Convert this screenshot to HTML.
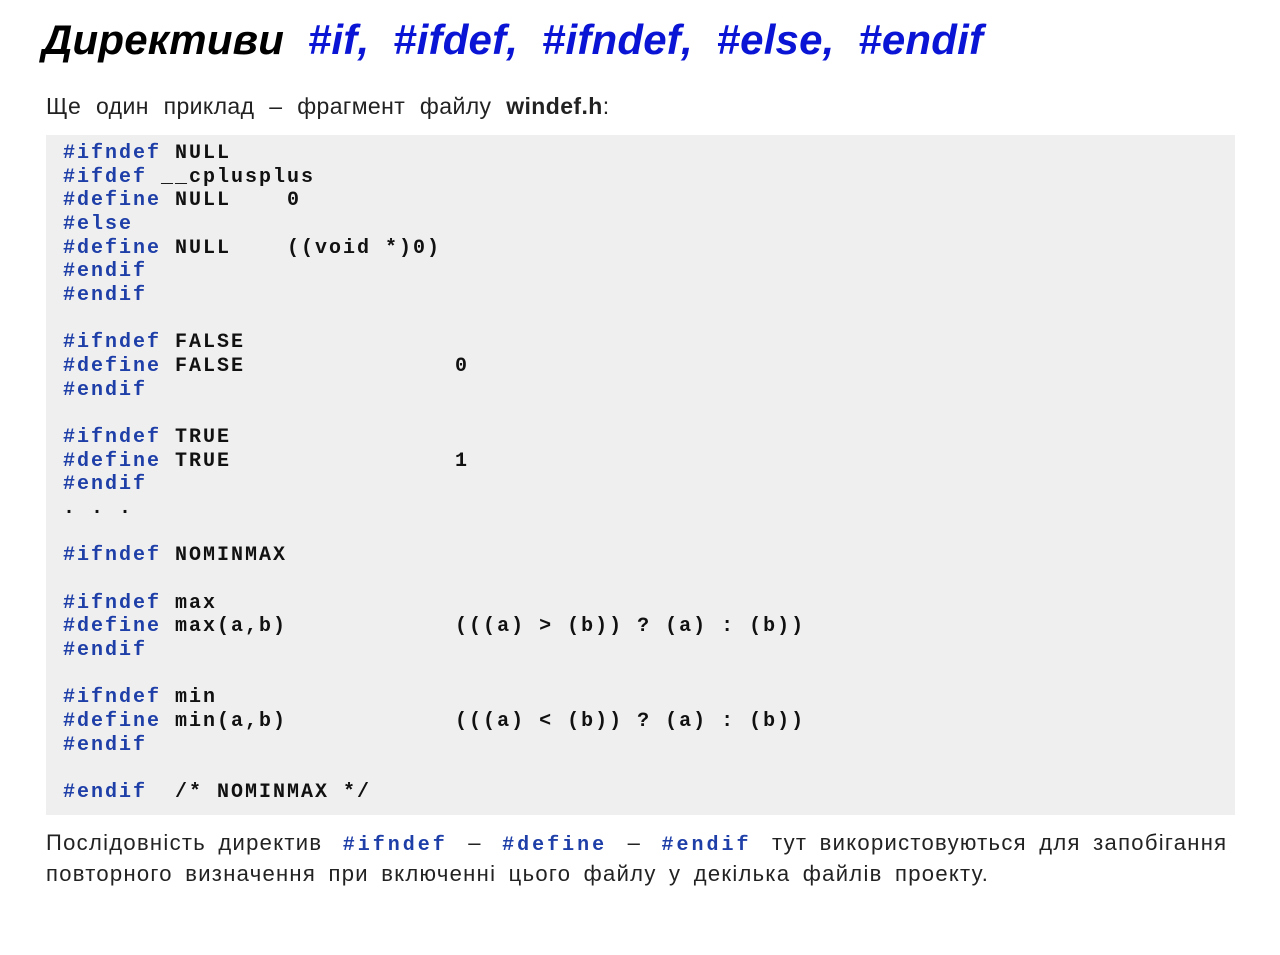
<!DOCTYPE html>
<html><head><meta charset="utf-8"><style>
body{margin:0;width:1280px;height:955px;background:#fff;position:relative;overflow:hidden;font-family:"Liberation Sans",sans-serif}
.t{position:absolute;left:42px;top:16px;font-size:42px;font-weight:bold;font-style:italic;white-space:pre;color:#000;letter-spacing:0.2px}
.t b{color:#0a14d4}
.s{position:absolute;left:46px;top:93px;font-size:23px;color:#222;word-spacing:8px;letter-spacing:0.4px}
.box{position:absolute;left:46px;top:135px;width:1189px;height:680px;background:#efefef}
pre{position:absolute;left:63px;top:142px;margin:0;font-family:"Liberation Mono",monospace;font-weight:bold;font-size:20px;letter-spacing:2px;line-height:23.67px;color:#111}
pre i{font-style:normal;color:#1f3fa8}
.p{position:absolute;left:46px;top:829px;width:1200px;font-size:22px;color:#222;line-height:28px;white-space:nowrap;letter-spacing:1.3px;word-spacing:5px}
.p code{font-family:"Liberation Mono",monospace;font-weight:bold;color:#1f3fa8;font-size:20px;letter-spacing:3px;margin:0 8px}
</style></head><body>
<div class="t">Директиви  <b>#if,  #ifdef,  #ifndef,  #else,  #endif</b></div>
<div class="s">Ще один приклад – фрагмент файлу <b>windef.h</b>:</div>
<div class="box"></div>
<pre><i>#ifndef</i> NULL
<i>#ifdef</i> __cplusplus
<i>#define</i> NULL    0
<i>#else</i>
<i>#define</i> NULL    ((void *)0)
<i>#endif</i>
<i>#endif</i>

<i>#ifndef</i> FALSE
<i>#define</i> FALSE               0
<i>#endif</i>

<i>#ifndef</i> TRUE
<i>#define</i> TRUE                1
<i>#endif</i>
. . .

<i>#ifndef</i> NOMINMAX

<i>#ifndef</i> max
<i>#define</i> max(a,b)            (((a) > (b)) ? (a) : (b))
<i>#endif</i>

<i>#ifndef</i> min
<i>#define</i> min(a,b)            (((a) < (b)) ? (a) : (b))
<i>#endif</i>

<i>#endif</i>  /* NOMINMAX */</pre>
<div class="p">Послідовність директив <code>#ifndef</code> – <code>#define</code> – <code>#endif</code> тут використовуються для запобігання<br>повторного визначення при включенні цього файлу у декілька файлів проекту.</div>
</body></html>
